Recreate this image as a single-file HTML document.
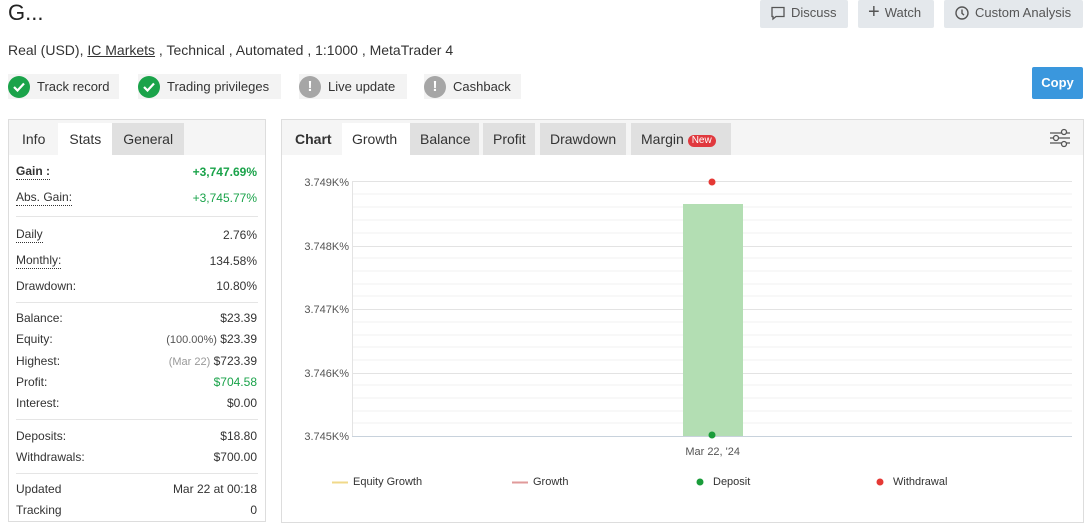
<!DOCTYPE html>
<html><head><meta charset="utf-8"><style>
*{box-sizing:border-box;margin:0;padding:0}
body{width:1088px;height:530px;background:#fff;font-family:"Liberation Sans",sans-serif;color:#333;font-size:13px;position:relative;overflow:hidden}
.a{position:absolute}
.btn{position:absolute;top:0;height:28px;background:#e4e8ec;color:#555;font-size:13px;line-height:24px;padding:0 10px;border-radius:2px;display:flex;align-items:flex-start;gap:5px;padding-top:1px}
.badge{position:absolute;top:74px;height:25px;background:#f3f3f3;display:flex;align-items:center;font-size:13px;color:#333}
.ic{width:22px;height:22px;border-radius:50%;display:flex;align-items:center;justify-content:center;margin-right:7px;color:#fff;font-weight:bold;font-size:15px}
.g{background:#1aa34a}.gr{background:#a6a6a6}
.box{position:absolute;border:1px solid #ddd;background:#fff}
.tabs{height:35px;background:#f5f5f5;display:flex;position:relative}
.tab{height:32px;margin-top:3px;line-height:32px;padding:0 11px;font-size:14px;color:#333}
.tab.on{background:#fff}
.tab.off{background:#e0e0e0;margin-right:4px}
.ct .tab{padding:0 10px}
.row{display:flex;justify-content:space-between;padding:0 8px 0 7px;height:21px;line-height:21px;font-size:12px;color:#333}
.u{border-bottom:1px dotted #333;line-height:14px;height:16px;margin-top:2px}
.sep{border-top:1px solid #e5e5e5;margin:5px 7px 5px 7px}
.grn{color:#1aa34a}
</style></head><body>
<div class="a" style="left:8px;top:0;font-size:22px;color:#222">G...</div>
<div class="a" style="left:8px;top:42px;font-size:14px;color:#333">Real (USD), <span style="text-decoration:underline">IC Markets</span> , Technical , Automated , 1:1000 , MetaTrader 4</div>

<div class="btn" style="left:760px;width:88px"><svg width="16" height="16" viewBox="0 0 16 16" style="margin-top:4px"><path d="M2 2.5h12v9H6l-3 2.5v-2.5H2z" fill="none" stroke="#555" stroke-width="1.3"/></svg>Discuss</div>
<div class="btn" style="left:858px;width:76px"><span style="font-size:20px;line-height:22px">+</span>Watch</div>
<div class="btn" style="left:944px;width:139px"><svg width="16" height="16" viewBox="0 0 16 16" style="margin-top:4px"><circle cx="8" cy="8" r="6" fill="none" stroke="#555" stroke-width="1.4"/><path d="M8 4.5V8.3l2 1.8" fill="none" stroke="#555" stroke-width="1.4"/></svg>Custom Analysis</div>

<div class="badge" style="left:8px;width:111px"><div class="ic g"><svg width="12" height="10" viewBox="0 0 12 10"><path d="M1 5l3.5 3.5L11 1.5" fill="none" stroke="#fff" stroke-width="2.2"/></svg></div>Track record</div>
<div class="badge" style="left:138px;width:143px"><div class="ic g"><svg width="12" height="10" viewBox="0 0 12 10"><path d="M1 5l3.5 3.5L11 1.5" fill="none" stroke="#fff" stroke-width="2.2"/></svg></div>Trading privileges</div>
<div class="badge" style="left:299px;width:108px"><div class="ic gr">!</div>Live update</div>
<div class="badge" style="left:424px;width:97px"><div class="ic gr">!</div>Cashback</div>

<div class="a" style="left:1032px;top:67px;width:51px;height:32px;background:#3a97dd;color:#fff;font-weight:bold;font-size:13px;line-height:32px;text-align:center;border-radius:2px">Copy</div>

<div class="box" style="left:8px;top:119px;width:258px;height:403px">
<div class="tabs"><div class="tab" style="padding:0 13px">Info</div><div class="tab on">Stats</div><div class="tab off">General</div></div>
<div style="padding-top:7px">
<div class="row"><span class="u" style="font-weight:bold">Gain :</span><span class="grn" style="font-weight:bold">+3,747.69%</span></div>
<div class="row" style="margin-top:5px"><span class="u">Abs. Gain:</span><span class="grn">+3,745.77%</span></div>
<div class="sep" style="margin:7px 7px 8px"></div>
<div class="row"><span class="u">Daily</span><span>2.76%</span></div>
<div class="row" style="margin-top:5px"><span class="u">Monthly:</span><span>134.58%</span></div>
<div class="row" style="margin-top:4px"><span>Drawdown:</span><span>10.80%</span></div>
<div class="sep"></div>
<div class="row"><span>Balance:</span><span>$23.39</span></div>
<div class="row"><span>Equity:</span><span><span style="font-size:11px;color:#555">(100.00%)</span> $23.39</span></div>
<div class="row" style="margin-top:1px"><span>Highest:</span><span><span style="font-size:11px;color:#999">(Mar 22)</span> $723.39</span></div>
<div class="row"><span>Profit:</span><span class="grn">$704.58</span></div>
<div class="row"><span>Interest:</span><span>$0.00</span></div>
<div class="sep" style="margin:5px 7px 6px"></div>
<div class="row"><span>Deposits:</span><span>$18.80</span></div>
<div class="row"><span>Withdrawals:</span><span>$700.00</span></div>
<div class="sep"></div>
<div class="row"><span>Updated</span><span>Mar 22 at 00:18</span></div>
<div class="row"><span>Tracking</span><span>0</span></div>
</div></div>

<div class="box" style="left:281px;top:119px;width:803px;height:404px">
<div class="tabs ct"><div class="tab" style="font-weight:bold;padding:0 13px 0 13px;width:60px">Chart</div><div class="tab on" style="width:68px">Growth</div><div class="tab off" style="width:69px">Balance</div><div class="tab off" style="width:52px;margin-right:5px">Profit</div><div class="tab off" style="width:86px;margin-right:5px">Drawdown</div><div class="tab off" style="width:100px">Margin <span style="background:#e0393e;color:#fff;font-size:10px;border-radius:7px;padding:0 4px;line-height:12px;display:inline-block;vertical-align:1px">New</span></div>
<svg class="a" style="left:767px;top:8px" width="22" height="20" viewBox="0 0 22 20"><g fill="none" stroke="#555" stroke-width="1.3"><path d="M1 5h20M1 10h20M1 15h20"/><circle cx="15" cy="4" r="2.5" fill="#f5f5f5"/><circle cx="7" cy="10" r="2.5" fill="#f5f5f5"/><circle cx="15" cy="16" r="2.5" fill="#f5f5f5"/></g></svg>
</div></div>

<svg class="a" style="left:0;top:0" width="1088" height="530">
<g stroke="#f2f2f2" stroke-width="1">
<path d="M352 194h720M352 207h720M352 220h720M352 233h720M352 258h720M352 271h720M352 284h720M352 296h720M352 322h720M352 335h720M352 347h720M352 360h720M352 385h720M352 398h720M352 411h720M352 423h720"/>
</g>
<g stroke="#e3e3e3"><path d="M352 181.5h720M352 246.5h720M352 309.5h720M352 373.5h720"/><path d="M352.5 181v255"/></g>
<path d="M352 436.5h720" stroke="#c8d2dc"/>
<rect x="683" y="204" width="60" height="232" fill="#b3deb3"/>
<circle cx="712" cy="182" r="3.5" fill="#e53935"/>
<circle cx="712" cy="435" r="3.5" fill="#1a9c3a"/>
<g font-family="Liberation Sans,sans-serif" font-size="11" fill="#555" text-anchor="end">
<text x="349" y="186">3.749K%</text><text x="349" y="250">3.748K%</text><text x="349" y="313">3.747K%</text><text x="349" y="377">3.746K%</text><text x="349" y="440">3.745K%</text>
<text x="740" y="455">Mar 22, '24</text>
</g>
<g font-family="Liberation Sans,sans-serif" font-size="11" fill="#333">
<path d="M332 482.5h16" stroke="#f0d98a" stroke-width="2"/><text x="353" y="485">Equity Growth</text>
<path d="M512 482.5h16" stroke="#e09a9a" stroke-width="2"/><text x="533" y="485">Growth</text>
<circle cx="700" cy="482" r="3.5" fill="#1a9c3a"/><text x="713" y="485">Deposit</text>
<circle cx="880" cy="482" r="3.5" fill="#e53935"/><text x="893" y="485">Withdrawal</text>
</g>
</svg>
</body></html>
